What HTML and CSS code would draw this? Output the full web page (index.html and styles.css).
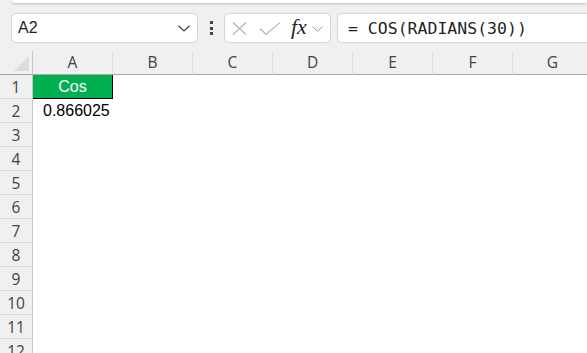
FILE: index.html
```html
<!DOCTYPE html>
<html>
<head>
<meta charset="utf-8">
<link rel="stylesheet" href="styles.css">
</head>
<body>
<div class="app">
  <div class="ribbon-edge"></div>
  <div class="fbar">
    <div class="namebox">
      <span class="name">A2</span>
      <svg class="chev" width="12" height="7" viewBox="0 0 12 7"><path d="M0.5 0.8 L6 6 L11.5 0.8" fill="none" stroke="#444" stroke-width="1.2"/></svg>
    </div>
    <div class="dots"><i></i><i></i><i></i></div>
    <div class="fxbox">
      <svg class="xicon" width="17" height="13" viewBox="0 0 17 13"><path d="M2 0.5 L15 12.5 M15 0.5 L2 12.5" fill="none" stroke="#b5b5b5" stroke-width="1.2"/></svg>
      <svg class="check" width="22" height="13" viewBox="0 0 22 13"><path d="M0.8 6.5 L7 12.3 L21 0.6" fill="none" stroke="#b5b5b5" stroke-width="1.2"/></svg>
      <span class="fx">fx</span>
      <svg class="chev2" width="11" height="6" viewBox="0 0 11 6"><path d="M0.5 0.6 L5.5 5.2 L10.5 0.6" fill="none" stroke="#9a9a9a" stroke-width="1"/></svg>
    </div>
    <div class="formula">= COS(RADIANS(30))</div>
  </div>
  <div class="sheet">
    <div class="corner"><span class="tri"></span></div>
    <div class="ch">A</div><div class="ch">B</div><div class="ch">C</div><div class="ch">D</div><div class="ch">E</div><div class="ch">F</div><div class="ch">G</div>

    <div class="rh">1</div><div class="cell green">Cos</div><div class="cell"></div><div class="cell"></div><div class="cell"></div><div class="cell"></div><div class="cell"></div><div class="cell"></div>
    <div class="rh">2</div><div class="cell num">0.866025</div><div class="cell"></div><div class="cell"></div><div class="cell"></div><div class="cell"></div><div class="cell"></div><div class="cell"></div>
    <div class="rh">3</div><div class="cell span"></div>
    <div class="rh">4</div><div class="cell span"></div>
    <div class="rh">5</div><div class="cell span"></div>
    <div class="rh">6</div><div class="cell span"></div>
    <div class="rh">7</div><div class="cell span"></div>
    <div class="rh">8</div><div class="cell span"></div>
    <div class="rh">9</div><div class="cell span"></div>
    <div class="rh">10</div><div class="cell span"></div>
    <div class="rh">11</div><div class="cell span"></div>
    <div class="rh">12</div><div class="cell span"></div>
  </div>
</div>
</body>
</html>
```

FILE: styles.css
```css
html, body {
  margin: 0;
  padding: 0;
  width: 587px;
  height: 353px;
  overflow: hidden;
  background: #f0f0f0;
}
.app {
  width: 587px;
  height: 353px;
  overflow: hidden;
  display: flex;
  flex-direction: column;
}
.ribbon-edge {
  height: 3px;
  margin-left: 12px;
  background: #ffffff;
  border-bottom-left-radius: 6px;
  box-shadow: 0 1px 3px rgba(0,0,0,0.22);
  flex: none;
}
.fbar {
  display: flex;
  align-items: center;
  height: 30px;
  margin-top: 10px;
  padding-left: 11px;
  flex: none;
}
.namebox, .fxbox, .formula {
  box-sizing: border-box;
  height: 30px;
  background: #ffffff;
  border: 1px solid #d6d6d6;
  border-radius: 5px;
  display: flex;
  align-items: center;
}
.namebox {
  width: 187px;
  padding: 0 7px 0 6px;
  justify-content: space-between;
}
.name {
  font-family: "Liberation Sans", Arial, sans-serif;
  font-size: 16px;
  color: #1f1f1f;
}
.chev { margin-top: 1px; }
.dots {
  width: 26px;
  display: flex;
  flex-direction: column;
  align-items: center;
  gap: 2.5px;
}
.dots i {
  display: block;
  width: 3px;
  height: 3px;
  background: #444;
}
.fxbox {
  width: 107px;
  padding-left: 6px;
}
.xicon { margin-right: 11px; }
.check { margin-right: 10px; }
.fx {
  font-family: "Liberation Serif", "DejaVu Serif", serif;
  font-style: italic;
  font-size: 22px;
  color: #262626;
  line-height: 1;
  margin-top: -2px;
  margin-right: 5px;
}
.chev2 { margin-top: 2px; }
.formula {
  flex: 1;
  margin-left: 6px;
  padding-left: 10px;
  border-right: none;
  border-top-right-radius: 0;
  border-bottom-right-radius: 0;
  font-family: "DejaVu Sans Mono", "Liberation Mono", monospace;
  font-size: 16.5px;
  color: #1f1f1f;
}
.sheet {
  margin-top: 8px;
  display: grid;
  grid-template-columns: 33px repeat(7, 80px);
  grid-auto-rows: 24px;
  flex: none;
}
.corner, .ch, .rh {
  box-sizing: border-box;
  background: #f0f0f0;
  font-family: "Open Sans", "Noto Sans", sans-serif;
  font-size: 15.5px;
  color: #424242;
  display: flex;
  align-items: center;
  justify-content: center;
}
.corner {
  border-right: 1px solid #c8c8c8;
  border-bottom: 1px solid #a8a8a8;
  position: relative;
}
.tri {
  position: absolute;
  right: 3px;
  bottom: 3px;
  width: 0;
  height: 0;
  border-left: 15px solid transparent;
  border-bottom: 15px solid #dcdcdc;
}
.ch {
  border-bottom: 1px solid #a8a8a8;
  border-right: 1px solid #dcdcdc;
  padding-bottom: 1px;
}
.rh {
  border-right: 1px solid #c8c8c8;
  border-bottom: 1px solid #dadada;
}
.cell {
  box-sizing: border-box;
  background: #ffffff;
  font-family: "Liberation Sans", Arial, sans-serif;
  font-size: 16px;
  color: #000;
  display: flex;
  align-items: center;
}
.span { grid-column: 2 / span 7; }
.green {
  background: #00b050;
  color: #ffffff;
  justify-content: center;
  border-right: 1px solid #000;
  border-bottom: 1px solid #000;
}
.num { padding-left: 10px; }
```
